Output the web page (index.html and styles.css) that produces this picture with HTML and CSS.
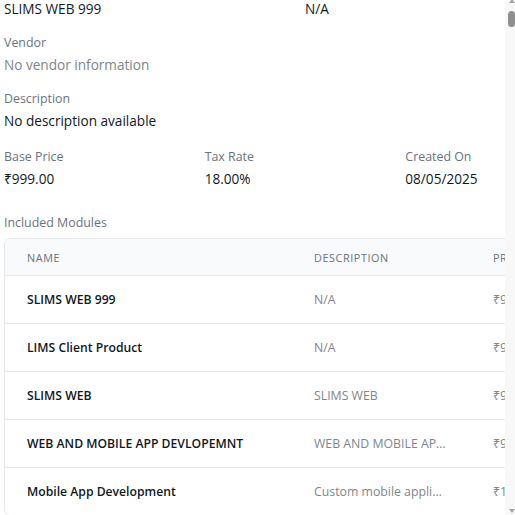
FILE: index.html
```html
<!DOCTYPE html>
<html lang="en">
<head>
<meta charset="utf-8">
<title>Product details</title>
<link rel="stylesheet" href="styles.css">
</head>
<body>
<div class="frame">
  <div class="viewport">
    <div class="content">
      <div class="pair">
        <div class="value">SLIMS WEB 999</div>
        <div class="value">N/A</div>
      </div>
      <div class="field">
        <div class="label">Vendor</div>
        <div class="value muted">No vendor information</div>
      </div>
      <div class="field">
        <div class="label">Description</div>
        <div class="value">No description available</div>
      </div>
      <div class="stats">
        <div class="field">
          <div class="label">Base Price</div>
          <div class="value">₹999.00</div>
        </div>
        <div class="field">
          <div class="label">Tax Rate</div>
          <div class="value">18.00%</div>
        </div>
        <div class="field">
          <div class="label">Created On</div>
          <div class="value">08/05/2025</div>
        </div>
      </div>
      <div class="modules">
        <div class="label">Included Modules</div>
        <div class="table-card">
          <table class="modules-table">
            <thead>
              <tr>
                <th class="col-name">Name</th>
                <th class="col-desc">Description</th>
                <th class="col-price">Price</th>
              </tr>
            </thead>
            <tbody>
              <tr>
                <td class="name">SLIMS WEB 999</td>
                <td class="desc"><span class="clip">N/A</span></td>
                <td class="price">₹999.00</td>
              </tr>
              <tr>
                <td class="name">LIMS Client Product</td>
                <td class="desc"><span class="clip">N/A</span></td>
                <td class="price">₹999.00</td>
              </tr>
              <tr>
                <td class="name">SLIMS WEB</td>
                <td class="desc"><span class="clip">SLIMS WEB</span></td>
                <td class="price">₹999.00</td>
              </tr>
              <tr>
                <td class="name">WEB AND MOBILE APP DEVLOPEMNT</td>
                <td class="desc"><span class="clip">WEB AND MOBILE APP DEVLOPEMNT</span></td>
                <td class="price">₹999.00</td>
              </tr>
              <tr>
                <td class="name">Mobile App Development</td>
                <td class="desc"><span class="clip">Custom mobile application development</span></td>
                <td class="price">₹15,000.00</td>
              </tr>
            </tbody>
          </table>
        </div>
      </div>
    </div>
  </div>
  <div class="scrollbar">
    <span class="arrow up"></span>
    <span class="thumb"></span>
    <span class="track"></span>
    <span class="arrow down"></span>
  </div>
</div>
</body>
</html>
```
FILE: styles.css
```css
* { box-sizing: border-box; }

html, body {
  margin: 0;
  padding: 0;
  background: #ffffff;
  overflow: hidden;
}

body {
  font-family: "Open Sans", "Noto Sans", sans-serif;
  color: #111827;
}

.frame {
  display: flex;
  width: 515px;
  height: 515px;
}

.viewport {
  flex: 1;
  overflow: hidden;
  background: #ffffff;
}

.content {
  width: 606px;
  margin-top: -1px;
  padding-left: 4px;
  display: flex;
  flex-direction: column;
  gap: 14px;
}

.pair {
  display: grid;
  grid-template-columns: 1fr 1fr;
}

.stats {
  display: grid;
  grid-template-columns: 1fr 1fr 1fr;
  margin-top: 2px;
}

.field {
  display: flex;
  flex-direction: column;
  gap: 2px;
}

.label {
  font-size: 12.4px;
  line-height: 20px;
  font-weight: 500;
  color: #6b7280;
}

.value {
  font-size: 13.6px;
  line-height: 20px;
  color: #111827;
}

.value.muted {
  color: #80858d;
}

.modules {
  margin-top: 10px;
  display: flex;
  flex-direction: column;
  gap: 5px;
}

.table-card {
  border: 1px solid #e5e7eb;
  border-radius: 7px;
  overflow: hidden;
  width: 620px;
}

.modules-table {
  width: 100%;
  border-collapse: collapse;
  table-layout: fixed;
}

.col-name { width: 287px; }
.col-desc { width: 179px; }
.col-price { width: 152px; }

.modules-table th {
  background: #f9fafb;
  text-align: left;
  font-size: 10.8px;
  line-height: 16px;
  font-weight: 500;
  letter-spacing: 0.6px;
  text-transform: uppercase;
  color: #6b7280;
  padding: 11px 22px 9px;
  border-bottom: 1px solid #e5e7eb;
  white-space: nowrap;
}

.modules-table td {
  font-size: 12.3px;
  line-height: 20px;
  padding: 14px 22px 13px;
  border-bottom: 1px solid #e5e7eb;
  white-space: nowrap;
  overflow: hidden;
}

.modules-table tbody tr:last-child td {
  border-bottom: none;
}

.modules-table td.name {
  font-size: 12.2px;
  font-weight: 600;
  color: #111827;
}

.modules-table td.desc,
.modules-table td.price {
  color: #80858d;
}

.clip {
  display: block;
  max-width: 132px;
  overflow: hidden;
  text-overflow: ellipsis;
  white-space: nowrap;
}

.scrollbar {
  width: 10px;
  flex: none;
  background: #f8f8f8;
  display: flex;
  flex-direction: column;
  align-items: center;
  padding-left: 3px;
}

.arrow {
  width: 0;
  height: 0;
  border-left: 3.5px solid transparent;
  border-right: 3.5px solid transparent;
}

.arrow.up {
  margin-top: -1px;
  border-bottom: 4px solid #a3a3a3;
}

.arrow.down {
  margin-bottom: 2px;
  border-top: 4px solid #a3a3a3;
}

.thumb {
  width: 7px;
  height: 16px;
  margin-top: 8px;
  border-radius: 3.5px;
  background: #8f8f8f;
}

.track {
  flex: 1;
}
```
